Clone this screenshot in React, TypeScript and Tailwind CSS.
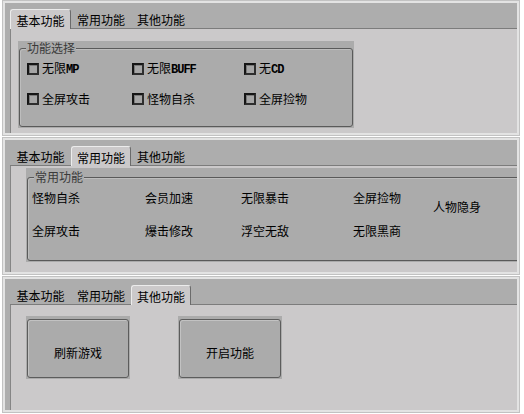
const tabNames = ["基本功能", "常用功能", "其他功能"];
const tabWidths = ["w-[61px]", "w-[60px]", "w-[60px]"];

function Tabs({ active }: { active: number }) {
  return (
    <div className="flex h-[26px] items-end border-b border-[#7c7c7c]">
      {tabNames.map((name, i) =>
        i === active ? (
          <div
            key={name}
            className={`${tabWidths[i]} relative z-10 -mb-px flex h-[20px] items-center justify-center rounded-t-[3px] border-x border-t border-l-[#ececec] border-t-[#ececec] border-r-[#6b6b6b] bg-[#cbc9ca] pt-[3px]`}
          >
            {name}
          </div>
        ) : (
          <div key={name} className={`${tabWidths[i]} flex h-[19px] items-center justify-center pt-[3px]`}>
            {name}
          </div>
        )
      )}
    </div>
  );
}

function Panel({ active, children, contentH }: { active: number; children: React.ReactNode; contentH: string }) {
  return (
    <div className="ml-[2px] w-[518px] border border-[#c2c2c2] bg-[#e3e3e3] p-[2px]">
      <div className="bg-[#adadad] pl-[5px]">
        <Tabs active={active} />
        <div className={`${contentH} overflow-hidden border-l border-[#858585] bg-[#cbc9ca]`}>{children}</div>
      </div>
    </div>
  );
}

function Latin({ children }: { children: React.ReactNode }) {
  return <span className="font-['Liberation_Mono',monospace] text-[12px] font-bold tracking-[-1px]">{children}</span>;
}

function Check({ children }: { children: React.ReactNode }) {
  return (
    <div className="flex h-[14px] items-center gap-[3px]">
      <span className="h-[12px] w-[12px] shrink-0 border-2 border-[#151515] border-b-[#2e2e2e] border-r-[#2e2e2e] bg-[#a6a6a6] shadow-[inset_1px_1px_0_#7a7a7a]" />
      <span>{children}</span>
    </div>
  );
}

function GroupBox({ title, children, className }: { title: string; children: React.ReactNode; className: string }) {
  return (
    <div className={`${className} bg-[#ababab] px-[1px] pb-[1px]`}>
      <div className="relative h-full rounded-[3px] border border-[#5a5a5a] shadow-[inset_1px_1px_0_#bdbdbd]">
        <span className="absolute -top-[8px] left-[6px] bg-[#ababab] px-[1px] leading-[14px] text-[#3a3a3a]">{title}</span>
        {children}
      </div>
    </div>
  );
}

function Button({ children }: { children: React.ReactNode }) {
  return (
    <div className="h-[63px] w-[104px] bg-[#ababab] px-[1px] pt-[3px] pb-[1px]">
      <div className="flex h-full items-center justify-center rounded-[3px] border border-[#5c5c5c] pt-[8px] shadow-[inset_1px_1px_0_#c2c2c2]">
        {children}
      </div>
    </div>
  );
}

export default function App() {
  return (
    <div className="h-[414px] w-[524px] overflow-hidden bg-white font-['Noto_Sans_CJK_SC',sans-serif] text-[12px] leading-[14px] text-black">
      <Panel active={0} contentH="h-[104px]">
        <GroupBox title="功能选择" className="ml-[7px] mt-[12px] h-[87px] w-[336px] pt-[7px]">
          <div className="grid grid-cols-[105px_112px_auto] gap-y-[16px] pl-[7px] pt-[13px]">
            <Check>
              无限<Latin>MP</Latin>
            </Check>
            <Check>
              无限<Latin>BUFF</Latin>
            </Check>
            <Check>
              无<Latin>CD</Latin>
            </Check>
            <Check>全屏攻击</Check>
            <Check>怪物自杀</Check>
            <Check>全屏捡物</Check>
          </div>
        </GroupBox>
      </Panel>

      <div className="mt-[1px]">
        <Panel active={1} contentH="h-[106px]">
          <GroupBox title="常用功能" className="ml-[15px] mt-[2px] h-[94px] w-[520px] pt-[9px]">
            <div className="flex pl-[4px] pt-[13px]">
              <div className="flex w-[113px] flex-col gap-y-[19px]">
                <span>怪物自杀</span>
                <span>全屏攻击</span>
              </div>
              <div className="flex w-[96px] flex-col gap-y-[19px]">
                <span>会员加速</span>
                <span>爆击修改</span>
              </div>
              <div className="flex w-[112px] flex-col gap-y-[19px]">
                <span>无限暴击</span>
                <span>浮空无敌</span>
              </div>
              <div className="flex w-[80px] flex-col gap-y-[19px]">
                <span>全屏捡物</span>
                <span>无限黑商</span>
              </div>
              <div className="pt-[9px]">
                <span>人物隐身</span>
              </div>
            </div>
          </GroupBox>
        </Panel>
      </div>

      <div className="mt-[1px]">
        <Panel active={2} contentH="h-[105px]">
          <div className="ml-[15px] mt-[11px] flex gap-[48px]">
            <Button>刷新游戏</Button>
            <Button>开启功能</Button>
          </div>
        </Panel>
      </div>
    </div>
  );
}
